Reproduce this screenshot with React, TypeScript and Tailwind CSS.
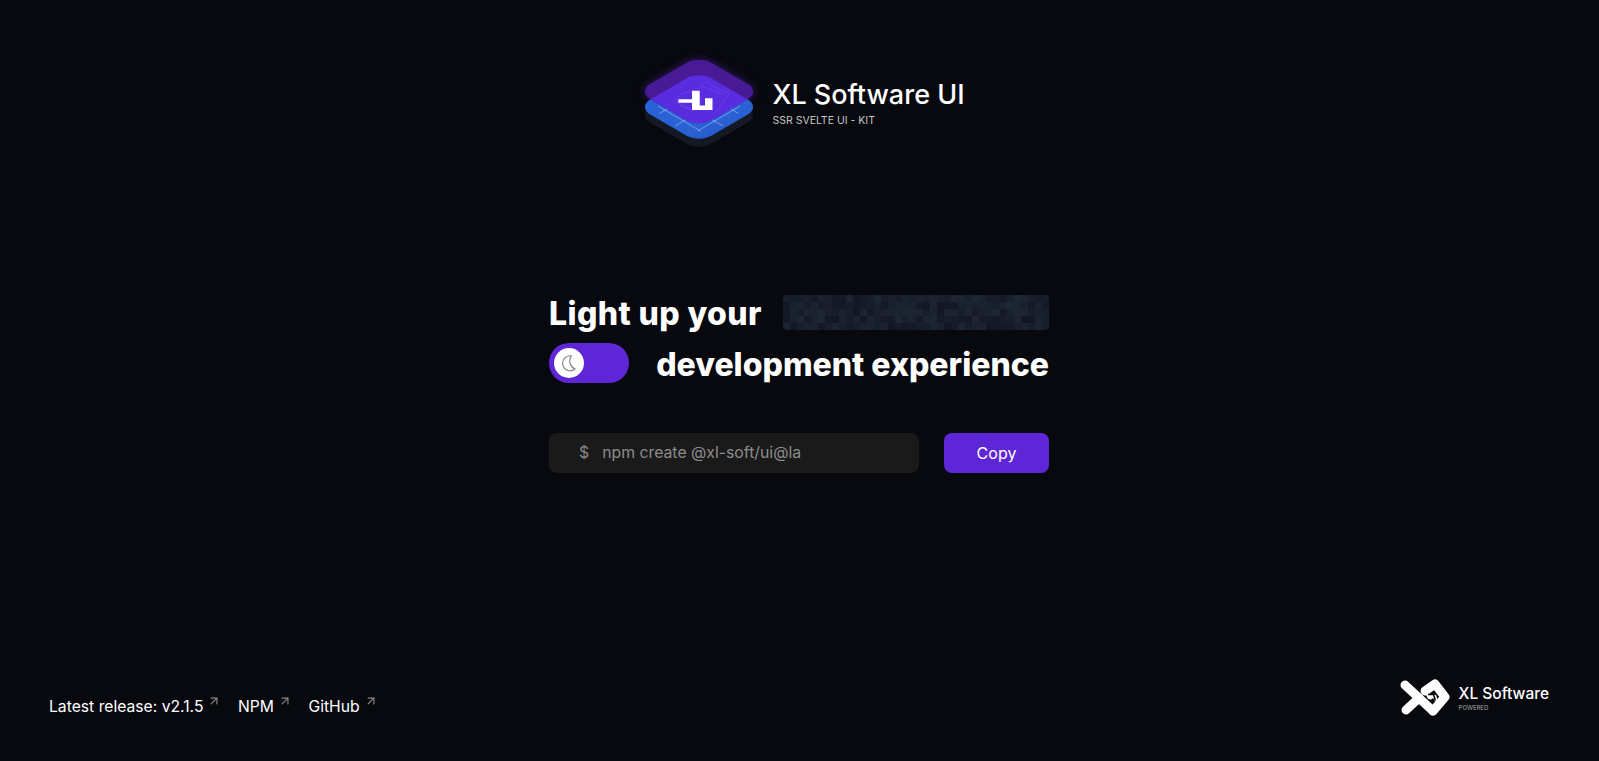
import React from 'react';
import { ArrowUpRight } from 'lucide-react';

const FONT = 'font-["Inter","Noto_Sans",sans-serif]';

// noise for the blurred/pixelated word in the headline
const CELLS = Array.from({ length: 190 }, (_, i) => {
    const n = Math.abs(Math.sin((i + 3) * 12.9898) * 43758.5453) % 1;
    const r = Math.round(18 + n * 12);
    const g = Math.round(24 + n * 14);
    const b = Math.round(35 + n * 18);
    return `rgb(${r},${g},${b})`;
});

const FOOTER_LINKS = ['Latest release: v2.1.5', 'NPM', 'GitHub'];

// isometric plate: a rounded square, rotated and flattened
const ISO = 'scale(1,0.585) rotate(45)';

function Plate({ y, fill }: { y: number; fill: string }) {
    return <rect x="-43.5" y="-43.5" width="87" height="87" rx="18" fill={fill} transform={`translate(65,${y}) ${ISO}`} />;
}

function StackLogo() {
    return (
        <svg width="130" height="100" viewBox="0 0 130 100" fill="none" className="shrink-0">
            <defs>
                <linearGradient id="blue" x1="12" y1="50" x2="118" y2="80" gradientUnits="userSpaceOnUse">
                    <stop offset="0" stopColor="#2a62d6" />
                    <stop offset="1" stopColor="#2447a8" />
                </linearGradient>
                <filter id="glow" x="-30%" y="-40%" width="160%" height="180%">
                    <feGaussianBlur stdDeviation="5" />
                </filter>
                <clipPath id="overlap">
                    <rect x="-43.5" y="-43.5" width="87" height="87" rx="18" transform={`translate(65,57) ${ISO}`} />
                </clipPath>
            </defs>
            <g filter="url(#glow)" opacity="0.55">
                <Plate y={41.5} fill="#5b21b6" />
            </g>
            <Plate y={65} fill="#131a26" />
            <Plate y={57} fill="url(#blue)" />
            {/* grid on the blue plate */}
            <g transform={`translate(65,57) ${ISO}`} stroke="#b4c6f0" strokeWidth="0.7" opacity="0.8">
                <path d="M-36 -20 H36 M-40 6 H40 M-30 28 H30 M-20 -36 V36 M6 -40 V40 M28 -30 V30" vectorEffect="non-scaling-stroke" />
            </g>
            <Plate y={41.5} fill="#481a96" />
            <g clipPath="url(#overlap)">
                <Plate y={41.5} fill="#5a2ce0" />
                <g stroke="#8a68ee" strokeWidth="0.5" opacity="0.6">
                    <path d="M65 35 L90 45 M72 32 L95 44 L82 62 M40 50 L60 62" />
                    <ellipse cx="55" cy="50" rx="12" ry="8" />
                </g>
            </g>
            <path fill="#fff" d="M44.5 49.3 H58 V40.7 H65.7 V55.5 H71 V48.3 H78.5 V60 H58 V52.7 H44.5 Z" />
        </svg>
    );
}

function XlMark() {
    return (
        <svg width="60" height="48" viewBox="0 0 60 48" fill="none" className="shrink-0">
            <g stroke="#fff" strokeWidth="9" strokeLinecap="round" strokeLinejoin="round">
                <path d="M13 13 L41 39" />
                <path d="M14 38 L27 26" />
                <path d="M33 19 L43 12 L53 25 L41 39" />
            </g>
            <path d="M33 21 L44 23 L46 29 L36 27 Z" fill="#fff" />
            <path d="M36 22.5 L41.5 22.5 L43 27 L39.5 27.5" stroke="#07090e" strokeWidth="1.6" />
        </svg>
    );
}

export default function App() {
    return (
        <div className={`${FONT} flex h-[761px] w-full flex-col overflow-hidden bg-[#07090e] text-white`}>
            {/* Logo */}
            <header className="flex justify-center pt-[50px]">
                <div className="flex items-center">
                    <StackLogo />
                    <div className="mt-[4px] ml-[8px]">
                        <h1 className="text-[27px] leading-[36px] font-medium">XL Software UI</h1>
                        <p className="mt-[1px] text-[10.5px] leading-[14px] text-[#c4c4c4]">SSR SVELTE UI - KIT</p>
                    </div>
                </div>
            </header>

            {/* Hero */}
            <div className="mt-[138px] flex justify-center pr-[1px]">
                <main className="w-[500px]">
                    <div className="flex h-[48px] items-center justify-between">
                        <span className="mt-[4px] text-[32px] font-extrabold tracking-[0.4px]">Light up your</span>
                        <div className="grid h-[35px] w-[266px] grid-cols-[repeat(38,7px)] grid-rows-[repeat(5,7px)] overflow-hidden rounded-[4px]">
                            {CELLS.map((c, i) => (
                                <span key={i} style={{ backgroundColor: c }} />
                            ))}
                        </div>
                    </div>
                    <div className="mt-[3px] flex h-[48px] items-center justify-between">
                        <div className="flex h-[40px] w-[80px] items-center rounded-full bg-[#5e26d6] pl-[5px]">
                            <div className="flex h-[30px] w-[30px] items-center justify-center rounded-full bg-white">
                                <svg width="18" height="18" viewBox="0 0 24 24" fill="none" stroke="#808080" strokeWidth="1.5">
                                    <path d="M15 2.5 A10 10 0 1 0 20 20 A12 12 0 0 1 15 2.5 Z" />
                                </svg>
                            </div>
                        </div>
                        <span className="mt-[4px] text-[32px] font-extrabold">development experience</span>
                    </div>

                    <div className="mt-[46px] flex items-center justify-between">
                        <div className="flex h-[40px] w-[370px] items-center rounded-[8px] bg-[#1a1a1a] pl-[30px] text-[15.8px] text-[#8c8c8c]">
                            <span>$</span>
                            <span className="ml-[13px]">npm create @xl-soft/ui@la</span>
                        </div>
                        <button className="h-[40px] w-[105px] rounded-[8px] bg-[#5e26d6] text-[16px] font-normal text-white">Copy</button>
                    </div>
                </main>
            </div>

            {/* Footer */}
            <footer className="mt-auto flex items-start justify-between pr-[50px] pb-[41px] pl-[49px]">
                <nav className="mt-[23px] flex gap-[16.5px]">
                    {FOOTER_LINKS.map(label => (
                        <a key={label} className="flex items-start text-[15.7px] leading-[24px]">
                            {label}
                            <ArrowUpRight size={14} strokeWidth={2} className="mt-[-1px] ml-[4px] text-[#888]" />
                        </a>
                    ))}
                </nav>
                <div className="flex items-center">
                    <XlMark />
                    <div className="mt-[4px] ml-[7px]">
                        <p className="text-[15.5px] leading-[20px] font-medium">XL Software</p>
                        <p className="text-[6px] leading-[8px] text-[#aaa]">POWERED</p>
                    </div>
                </div>
            </footer>
        </div>
    );
}
